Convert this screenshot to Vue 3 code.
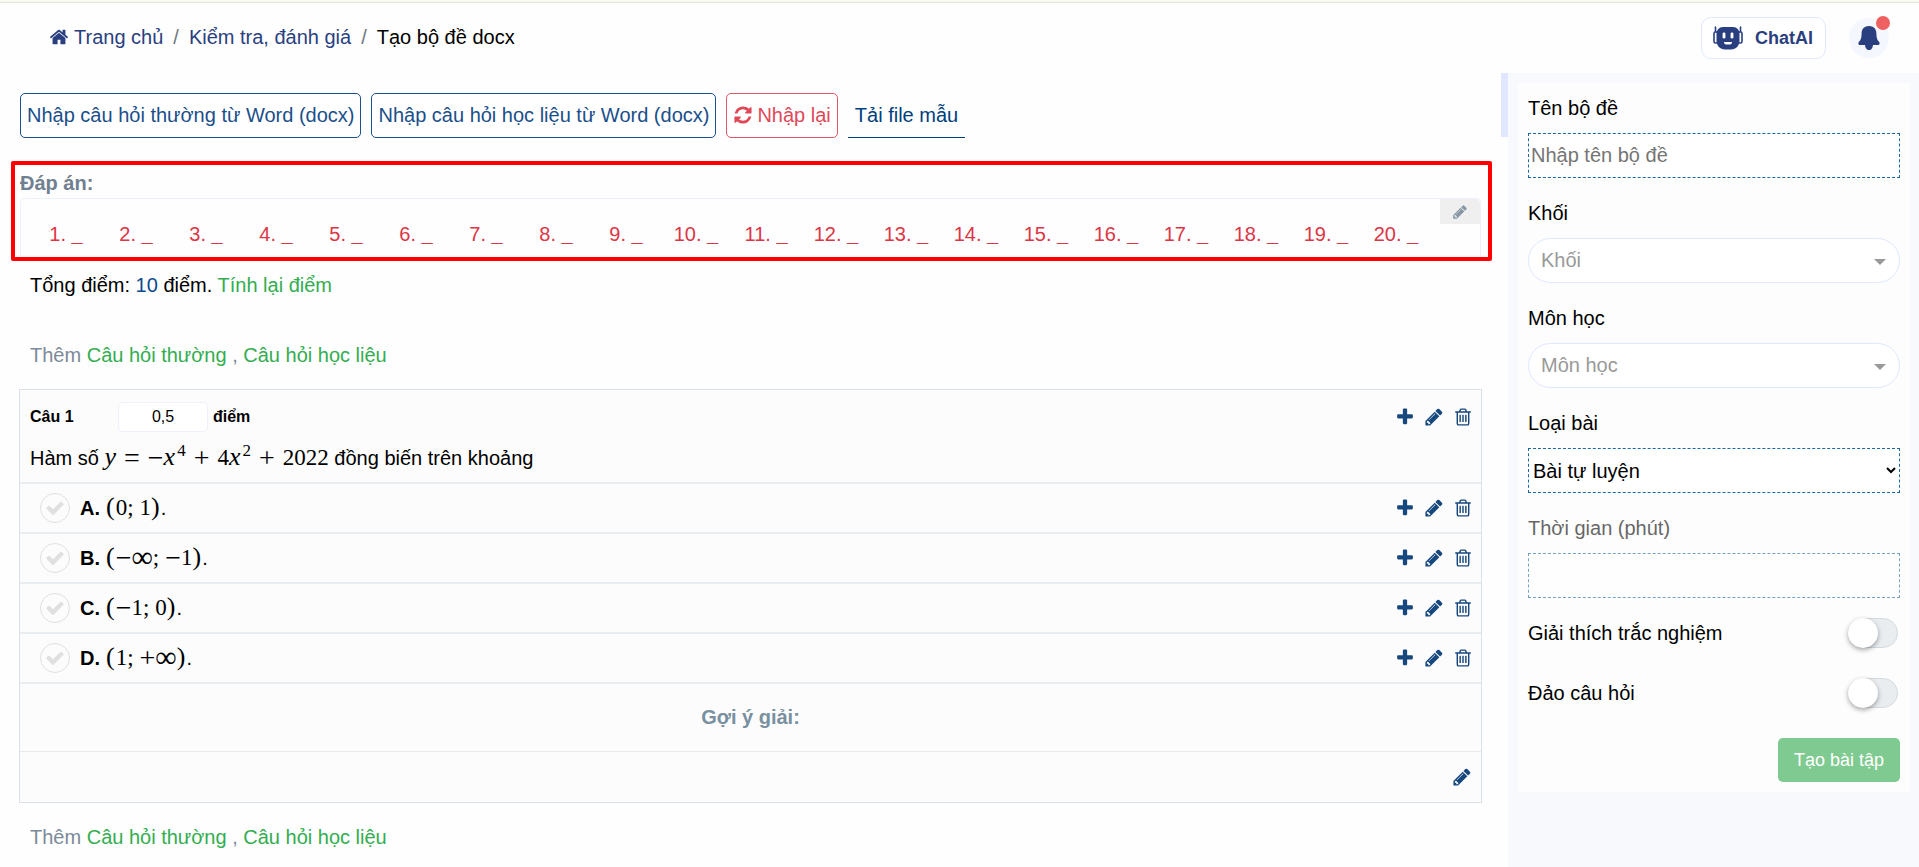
<template>
  <div class="page">
    <header class="topbar">
      <nav class="breadcrumb" aria-label="Breadcrumb">
        <a href="#" class="crumb">
          <svg class="icon" viewBox="0 0 1792 1792"><path :d="icons.home" /></svg>
          <span>Trang chủ</span>
        </a>
        <span class="slash">/</span>
        <a href="#" class="crumb">Kiểm tra, đánh giá</a>
        <span class="slash">/</span>
        <span class="current">Tạo bộ đề docx</span>
      </nav>
      <div class="top-actions">
        <button type="button" class="chat-btn">
          <svg width="30" height="24" viewBox="0 0 30 24">
            <path d="M2.500 1v6M27.500 1v6" stroke="#2a3f80" stroke-width="1.6" stroke-linecap="round" />
            <rect x="1" y="6" width="4" height="11" rx="1.5" fill="#fff" stroke="#2a3f80" stroke-width="1.6" />
            <rect x="25" y="6" width="4" height="11" rx="1.5" fill="#fff" stroke="#2a3f80" stroke-width="1.6" />
            <path d="M10 1h10c4 0 6.500 3 6.500 7v6c0 6-3.500 9.500-8.500 9.500h-6c-5 0-8.500-3.500-8.500-9.500V8c0-4 2.500-7 6.500-7z" fill="#2a3f80" />
            <rect x="9.600" y="6.500" width="2.800" height="6" rx="1.300" fill="#fff" />
            <rect x="17.600" y="6.500" width="2.800" height="6" rx="1.300" fill="#fff" />
            <path d="M11 16h8c0 1.800-1 2.400-2 2.400h-4c-1 0-2-.6-2-2.400z" fill="#fff" />
          </svg>
          ChatAI
        </button>
        <button type="button" class="bell-btn" aria-label="Thông báo">
          <svg width="24" height="26" viewBox="0 0 24 26">
            <path d="M12 1c4.6 0 7.4 3 7.4 7.4 0 4.500 1 6.600 2.600 8.300 1 1.100.9 3.300-1.200 3.300H3.200c-2.100 0-2.200-2.200-1.200-3.300C3.600 15 4.600 12.900 4.600 8.400 4.600 4 7.400 1 12 1z" />
            <path d="M8 19h8c0 4-1.800 6-4 6s-4-2-4-6z" />
          </svg>
          <span class="dot"></span>
        </button>
      </div>
    </header>

    <div class="layout">
      <main class="content">
        <div class="scroll-thumb"></div>

        <div class="toolbar">
          <button type="button" class="btn">Nhập câu hỏi thường từ Word (docx)</button>
          <button type="button" class="btn">Nhập câu hỏi học liệu từ Word (docx)</button>
          <button type="button" class="btn btn-danger">
            <svg class="icon" viewBox="0 0 1792 1792"><path :d="icons.refresh" /></svg>
            <span>Nhập lại</span>
          </button>
          <a href="#" class="btn-link">Tải file mẫu</a>
        </div>

        <section class="answers">
          <h2>Đáp án:</h2>
          <div class="answer-box">
            <ul>
              <li v-for="n in 20" :key="n">{{ n }}. <b>_</b></li>
            </ul>
            <button type="button" class="answer-edit" aria-label="Sửa đáp án">
              <svg viewBox="0 0 1792 1792"><path :d="icons.pencil" /></svg>
            </button>
          </div>
        </section>

        <p class="total">
          Tổng điểm: <span class="score">10</span> điểm.
          <a href="#" class="green">Tính lại điểm</a>
        </p>

        <p class="add-line">
          Thêm <a href="#">Câu hỏi thường</a> , <a href="#">Câu hỏi học liệu</a>
        </p>

        <article class="question">
          <div class="question-head">
            <div class="question-meta">
              <label for="point">Câu 1</label>
              <input id="point" v-model="point" type="text" />
              <span>điểm</span>
              <div class="tools">
                <button v-for="t in tools" :key="t.icon" type="button" :aria-label="t.label">
                  <svg class="icon" viewBox="0 0 1792 1792"><path :d="icons[t.icon]" /></svg>
                </button>
              </div>
            </div>
            <p class="question-text">
              Hàm số
              <span class="math"><i>y</i><span class="op">=</span><span class="sign">−</span><i>x</i><sup>4</sup><span class="op">+</span>4<i>x</i><sup>2</sup><span class="op">+</span>2022</span>
              đồng biến trên khoảng
            </p>
          </div>

          <div v-for="o in options" :key="o.key" class="option">
            <button type="button" class="check" :aria-label="'Chọn ' + o.key">
              <svg class="icon" viewBox="0 0 1792 1792"><path :d="icons.check" /></svg>
            </button>
            <b>{{ o.key }}.</b>
            <span><span class="math"><span v-for="(c, i) in o.interval" :key="i" :class="charClass(c)">{{ c }}</span></span>.</span>
            <div class="tools">
              <button v-for="t in tools" :key="t.icon" type="button" :aria-label="t.label">
                <svg class="icon" viewBox="0 0 1792 1792"><path :d="icons[t.icon]" /></svg>
              </button>
            </div>
          </div>

          <h3 class="hint-title">Gợi ý giải:</h3>
          <div class="hint-body">
            <div class="tools">
              <button type="button" aria-label="Sửa gợi ý">
                <svg class="icon" viewBox="0 0 1792 1792"><path :d="icons.pencil" /></svg>
              </button>
            </div>
          </div>
        </article>

        <p class="add-line add-bottom">
          Thêm <a href="#">Câu hỏi thường</a> , <a href="#">Câu hỏi học liệu</a>
        </p>
      </main>

      <aside class="sidebar">
        <form class="panel" @submit.prevent>
          <div class="field">
            <label for="name">Tên bộ đề</label>
            <input id="name" v-model="name" type="text" placeholder="Nhập tên bộ đề" />
          </div>
          <div class="field">
            <label for="grade">Khối</label>
            <div class="pill">
              <select id="grade" v-model="grade">
                <option value="">Khối</option>
              </select>
            </div>
          </div>
          <div class="field">
            <label for="subject">Môn học</label>
            <div class="pill">
              <select id="subject" v-model="subject">
                <option value="">Môn học</option>
              </select>
            </div>
          </div>
          <div class="field">
            <label for="kind">Loại bài</label>
            <select id="kind" v-model="kind" class="kind">
              <option value="practice">Bài tự luyện</option>
            </select>
          </div>
          <div class="field faded">
            <label for="time">Thời gian (phút)</label>
            <input id="time" v-model="time" type="text" />
          </div>
          <div class="switch-row">
            <label for="explain">Giải thích trắc nghiệm</label>
            <input id="explain" v-model="explain" type="checkbox" class="switch" />
          </div>
          <div class="switch-row">
            <label for="shuffle">Đảo câu hỏi</label>
            <input id="shuffle" v-model="shuffle" type="checkbox" class="switch" />
          </div>
          <button type="submit" class="submit">Tạo bài tập</button>
        </form>
      </aside>
    </div>
  </div>
</template>

<script setup>
import { ref } from 'vue';

const point = ref('0,5');
const name = ref('');
const grade = ref('');
const subject = ref('');
const kind = ref('practice');
const time = ref('');
const explain = ref(false);
const shuffle = ref(false);

const options = [
  { key: 'A', interval: '(0;1)' },
  { key: 'B', interval: '(−∞;−1)' },
  { key: 'C', interval: '(−1;0)' },
  { key: 'D', interval: '(1;+∞)' },
];

function charClass(c) {
  if (c === '(' || c === ')') return 'paren';
  if (c === ';') return 'semi';
  if (c === '∞') return 'inf';
  if (c === '−' || c === '+') return 'sign';
  return '';
}

const tools = [
  { icon: 'plus', label: 'Thêm' },
  { icon: 'pencil', label: 'Sửa' },
  { icon: 'trash', label: 'Xóa' },
];

const icons = {
  home: 'M1472 992v480q0 26-19 45t-45 19h-384v-384h-256v384h-384q-26 0-45-19t-19-45v-480q0-1 .5-3t.5-3l575-474 575 474q1 2 1 6zm223-69l-62 74q-8 9-21 11h-3q-13 0-21-7l-692-577-692 577q-12 8-24 7-13-2-21-11l-62-74q-8-10-7-23.5t11-21.5l719-599q32-26 76-26t76 26l244 204v-195q0-14 9-23t23-9h192q14 0 23 9t9 23v408l219 182q10 8 11 21.5t-7 23.5z',
  refresh: 'M1639 1056q0 5-1 7-64 268-268 434.5t-478 166.5q-146 0-282.5-55t-243.5-157l-129 129q-19 19-45 19t-45-19-19-45v-448q0-26 19-45t45-19h448q26 0 45 19t19 45-19 45l-137 137q71 66 161 102t187 36q134 0 250-65t186-179q11-17 53-117 8-23 30-23h192q13 0 22.5 9.5t9.5 22.5zm25-800v448q0 26-19 45t-45 19h-448q-26 0-45-19t-19-45 19-45l138-138q-148-137-349-137-134 0-250 65t-186 179q-11 17-53 117-8 23-30 23h-199q-13 0-22.5-9.5t-9.5-22.5v-7q65-268 270-434.5t480-166.5q146 0 284 55.5t245 156.5l130-129q19-19 45-19t45 19 19 45z',
  plus: 'M1600 736v192q0 40-28 68t-68 28h-416v416q0 40-28 68t-68 28h-192q-40 0-68-28t-28-68v-416h-416q-40 0-68-28t-28-68v-192q0-40 28-68t68-28h416v-416q0-40 28-68t68-28h192q40 0 68 28t28 68v416h416q40 0 68 28t28 68z',
  pencil: 'M491 1536l91-91-235-235-91 91v107h128v128h107zm523-928q0-22-22-22-10 0-17 7l-542 542q-7 7-7 17 0 22 22 22 10 0 17-7l542-542q7-7 7-17zm-54-192l416 416-832 832h-416v-416zm683 96q0 53-37 90l-166 166-416-416 166-165q36-38 90-38 53 0 91 38l235 234q37 39 37 91z',
  trash: 'M704 736v576q0 14-9 23t-23 9h-64q-14 0-23-9t-9-23v-576q0-14 9-23t23-9h64q14 0 23 9t9 23zm256 0v576q0 14-9 23t-23 9h-64q-14 0-23-9t-9-23v-576q0-14 9-23t23-9h64q14 0 23 9t9 23zm256 0v576q0 14-9 23t-23 9h-64q-14 0-23-9t-9-23v-576q0-14 9-23t23-9h64q14 0 23 9t9 23zm128 724v-948h-896v948q0 22 7 40.5t14.5 27 10.5 8.5h832q3 0 10.5-8.5t14.5-27 7-40.5zm-672-1076h448l-48-117q-7-9-17-11h-317q-10 2-17 11zm928 32v64q0 14-9 23t-23 9h-96v948q0 83-47 143.5t-113 60.5h-832q-66 0-113-58.5t-47-141.5v-952h-96q-14 0-23-9t-9-23v-64q0-14 9-23t23-9h309l70-167q15-37 54-63t79-26h320q40 0 79 26t54 63l70 167h309q14 0 23 9t9 23z',
  check: 'M1671 566q0 40-28 68l-724 724-136 136q-28 28-68 28t-68-28l-136-136-362-362q-28-28-28-68t28-68l136-136q28-28 68-28t68 28l294 295 656-657q28-28 68-28t68 28l136 136q28 28 28 68z',
};
</script>

<style>
body {
  background: #fefefe;
}
</style>

<style scoped>
.page {
  display: flex;
  flex-direction: column;
  min-height: 100vh;
  font-family: "Liberation Sans", Arial, sans-serif;
  font-size: 20px;
  line-height: 30px;
  color: #000;
}
.page * {
  box-sizing: border-box;
}
button,
input,
select {
  font: inherit;
  color: inherit;
}
button {
  cursor: pointer;
}
a {
  text-decoration: none;
}
p,
h2,
h3,
ul {
  margin: 0;
  padding: 0;
}
.icon {
  display: block;
  width: 20px;
  height: 20px;
  fill: currentColor;
}

/* header */
.topbar {
  display: flex;
  align-items: center;
  justify-content: space-between;
  height: 73px;
  padding: 0 30px 0 49px;
  background: linear-gradient(#f8faf3 2px, #dfe6d0 2px, #dfe6d0 3px, transparent 3px);
}
.breadcrumb {
  display: flex;
  align-items: center;
  gap: 10px;
}
.crumb {
  display: flex;
  align-items: center;
  gap: 5px;
  color: #2a3f80;
}
.slash {
  color: #6c757d;
}
.top-actions {
  display: flex;
  align-items: center;
  gap: 23px;
  padding-top: 3px;
}
.chat-btn {
  display: flex;
  align-items: center;
  gap: 12px;
  height: 42px;
  padding: 0 12px 0 11px;
  border: 1px solid #e0e7ff;
  border-radius: 10px;
  background: #fff;
  color: #2a3f80;
  font-size: 18px;
  font-weight: 700;
}
.bell-btn {
  position: relative;
  display: flex;
  align-items: center;
  justify-content: center;
  width: 40px;
  height: 40px;
  padding: 0;
  border: 0;
  border-radius: 50%;
  background: #f5f7ff;
}
.bell-btn svg {
  fill: #2a3f80;
}
.dot {
  position: absolute;
  top: -2px;
  right: -1px;
  width: 14px;
  height: 14px;
  border-radius: 50%;
  background: #ef6060;
}

.layout {
  display: flex;
  flex: 1;
}
.content {
  position: relative;
  flex: 1;
  min-width: 0;
  padding: 20px 27px 0 20px;
}
.scroll-thumb {
  position: absolute;
  top: 0;
  right: 0;
  width: 7px;
  height: 64px;
  background: #e0e7ff;
}

.toolbar {
  display: flex;
  gap: 10px;
}
.btn {
  display: flex;
  align-items: center;
  gap: 4px;
  height: 45px;
  padding: 0 6px 2px;
  border: 1px solid #1b4f8a;
  border-radius: 5px;
  background: #fff;
  color: #1b4f8a;
}
.btn-danger {
  border-color: #e25563;
  color: #e04858;
}
.btn-link {
  display: flex;
  align-items: center;
  height: 45px;
  padding: 0 7px;
  border-bottom: 1px solid #003f7d;
  color: #003f7d;
}

/* answer key */
.answers {
  height: 100px;
  margin: 23px -11px 0 -9px;
  padding: 3px 7px 0 5px;
  border: 4px solid #f00;
  border-radius: 2px;
}
.answers h2 {
  font-size: 20px;
  font-weight: 700;
  color: #708090;
}
.answer-box {
  display: flex;
  align-items: flex-start;
  height: 59px;
  border: 1px solid #eef0fa;
  border-bottom: 0;
  border-radius: 5px 5px 0 0;
}
.answer-box ul {
  display: flex;
  flex: 1;
  padding: 20px 0 0 10px;
  list-style: none;
  color: #dc3545;
}
.answer-box li {
  width: 70px;
  text-align: center;
}
.answer-edit {
  display: flex;
  align-items: center;
  justify-content: center;
  width: 40px;
  height: 25px;
  padding: 0;
  border: 0;
  border-radius: 0 5px 0 0;
  background: #efefef;
}
.answer-edit svg {
  width: 16px;
  height: 16px;
  fill: #8796a5;
}

.total {
  padding: 9px 10px 0;
}
.score {
  color: #0a4a8f;
}
.green,
.add-line a {
  color: #33ad50;
}
.add-line {
  padding: 40px 10px 0;
  color: #7c8a99;
}
.add-bottom {
  padding-top: 19px;
}

/* question card */
.question {
  margin: 19px -1px 0;
  border: 1px solid #dae1e8;
  background: #fcfcfd;
}
.question-head {
  padding: 12px 8px 4px 10px;
}
.question-meta {
  display: flex;
  align-items: center;
  font-size: 16px;
  font-weight: 700;
}
.question-meta label {
  width: 88px;
}
.question-meta input {
  width: 90px;
  height: 30px;
  margin-right: 5px;
  border: 1px solid #eef0fa;
  border-radius: 5px;
  background: #fff;
  font-weight: 400;
  text-align: center;
}
.tools {
  display: flex;
  gap: 9px;
  margin-left: auto;
  color: #16477d;
}
.tools button {
  padding: 0;
  border: 0;
  background: none;
}
.question-text {
  height: 46px;
  padding-top: 6px;
  line-height: 40px;
}
.math {
  font-family: "Liberation Serif", "Times New Roman", serif;
  font-size: 23px;
  line-height: 30px;
  white-space: nowrap;
}
.math i {
  font-size: 26px;
  line-height: 0;
}
.math sup {
  margin-left: 2px;
  font-size: 17px;
  line-height: 0;
}
.op,
.sign,
.inf {
  font-size: 28px;
  line-height: 0;
  vertical-align: -2px;
}
.op {
  margin: 0 8px;
}
.paren {
  margin-right: 1px;
  font-size: 26px;
  line-height: 0;
}
.inf {
  font-size: 30px;
}
.semi {
  margin-right: 6px;
}
.option {
  display: flex;
  align-items: center;
  gap: 10px;
  height: 50px;
  padding: 0 8px 0 20px;
  border-top: 2px solid #e8edf1;
}
.option > b + span {
  margin-left: -4px;
}
.check {
  display: flex;
  align-items: center;
  justify-content: center;
  width: 30px;
  height: 30px;
  padding: 0;
  border: 1px solid #e0e0e0;
  border-radius: 50%;
  background: none;
  color: #e0e0e0;
}
.hint-title {
  height: 69px;
  border-top: 2px solid #e8edf1;
  font-size: 20px;
  line-height: 67px;
  text-align: center;
  color: #7890a0;
}
.hint-body {
  display: flex;
  align-items: center;
  height: 51px;
  padding: 0 9px;
  border-top: 1px solid #e4eaee;
}

/* settings panel */
.sidebar {
  flex: 0 0 411px;
  padding: 10px 9px 0 10px;
  background: #f8f9fc;
}
.panel {
  display: flex;
  flex-direction: column;
  gap: 20px;
  padding: 10px;
  background: #fdfdfd;
}
.field {
  display: flex;
  flex-direction: column;
  gap: 10px;
}
.field input,
.field select {
  width: 100%;
  height: 45px;
  border: 1px dashed #1c68a6;
  border-radius: 0;
  background: #fff;
}
.field input {
  padding: 1px 2px;
}
.field input::placeholder {
  color: #757575;
}
.field .kind {
  padding: 0;
}
.pill {
  position: relative;
}
.field .pill select {
  display: block;
  padding: 0 30px 2px 12px;
  border: 1px solid #e0e7ff;
  border-radius: 23px;
  color: #999;
  appearance: none;
}
.pill::after {
  content: "";
  position: absolute;
  top: 21px;
  right: 14px;
  border: 6px solid transparent;
  border-top-color: #999;
  border-bottom: 0;
  pointer-events: none;
}
.faded {
  opacity: 0.6;
}
.switch-row {
  display: flex;
  align-items: center;
  justify-content: space-between;
  margin-bottom: 10px;
  padding-right: 2px;
}
.switch {
  width: 50px;
  height: 30px;
  margin: 0;
  border: 1px solid #d3dbe1;
  border-radius: 15px;
  background: #e9edf0;
  appearance: none;
  cursor: pointer;
}
.switch::before {
  content: "";
  display: block;
  width: 30px;
  height: 30px;
  margin: -1px;
  border-radius: 50%;
  background: #fff;
  box-shadow: 0 2px 5px rgba(0, 0, 0, 0.35);
}
.switch:checked {
  background: #7fca91;
}
.switch:checked::before {
  margin-left: 19px;
}
.submit {
  align-self: flex-end;
  height: 44px;
  padding: 0 16px 1px;
  border: 0;
  border-radius: 5px;
  background: #7fca91;
  color: #fff;
  font-size: 18px;
}
</style>
